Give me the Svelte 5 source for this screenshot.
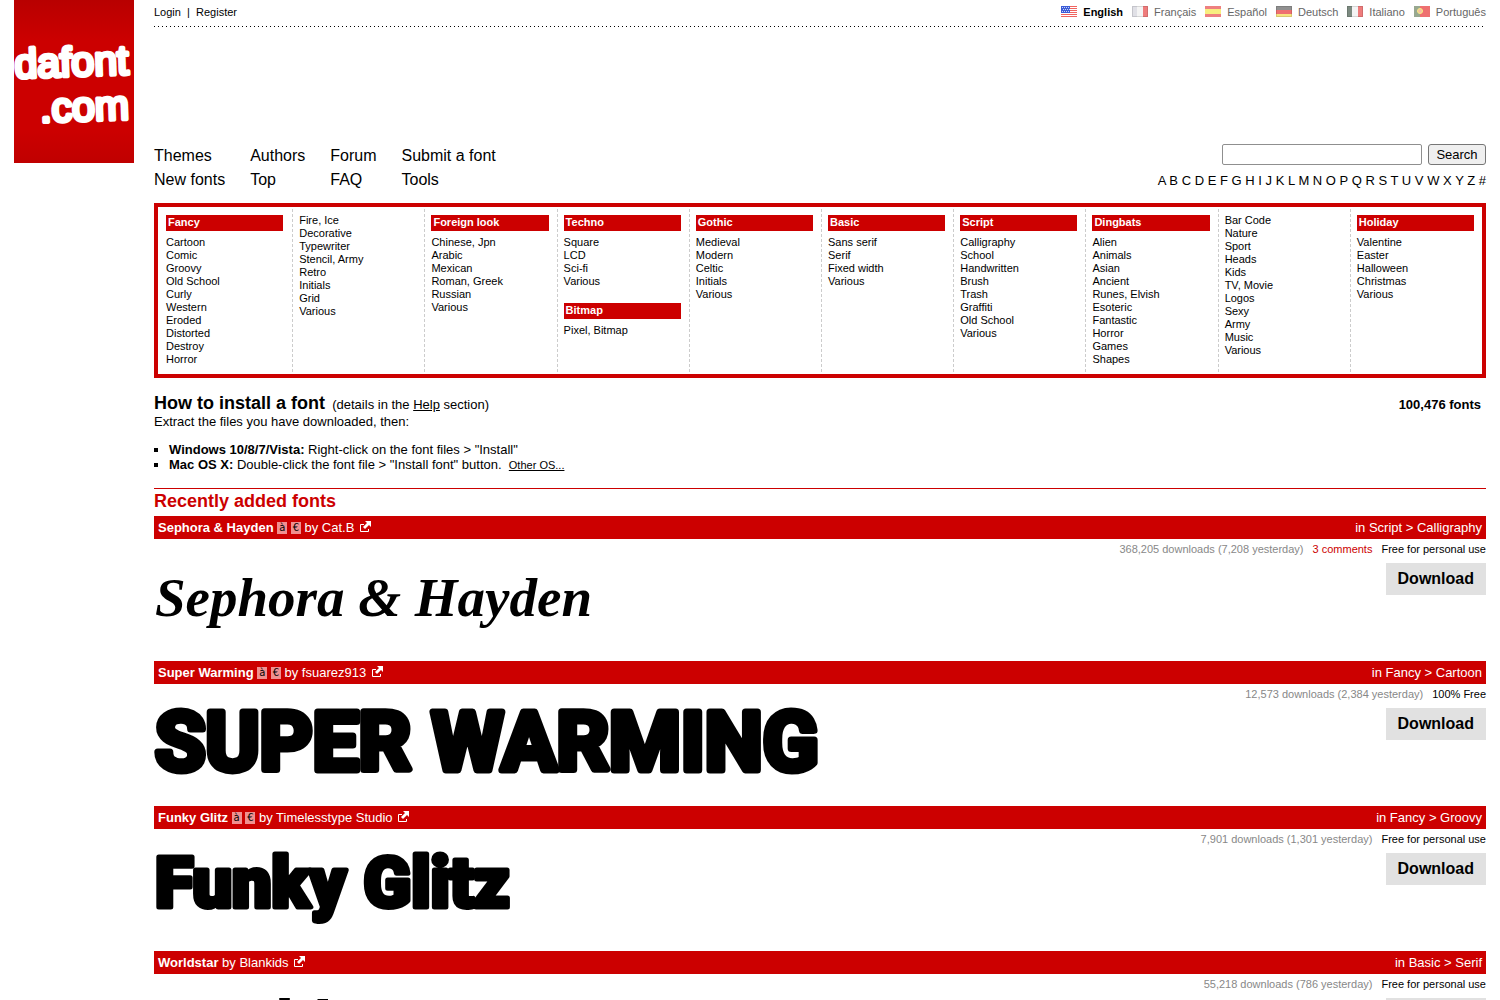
<script>
	const languages = [
		{ code: "us", name: "English" },
		{ code: "fr", name: "Français" },
		{ code: "es", name: "Español" },
		{ code: "de", name: "Deutsch" },
		{ code: "it", name: "Italiano" },
		{ code: "pt", name: "Português" },
	];

	const menu = [
		["Themes", "New fonts"],
		["Authors", "Top"],
		["Forum", "FAQ"],
		["Submit a font", "Tools"],
	];

	const letters = "ABCDEFGHIJKLMNOPQRSTUVWXYZ#".split("");

	const categories = [
		[{ title: "Fancy", items: ["Cartoon", "Comic", "Groovy", "Old School", "Curly", "Western", "Eroded", "Distorted", "Destroy", "Horror"] }],
		[{ items: ["Fire, Ice", "Decorative", "Typewriter", "Stencil, Army", "Retro", "Initials", "Grid", "Various"] }],
		[{ title: "Foreign look", items: ["Chinese, Jpn", "Arabic", "Mexican", "Roman, Greek", "Russian", "Various"] }],
		[
			{ title: "Techno", items: ["Square", "LCD", "Sci-fi", "Various"] },
			{ title: "Bitmap", items: ["Pixel, Bitmap"] },
		],
		[{ title: "Gothic", items: ["Medieval", "Modern", "Celtic", "Initials", "Various"] }],
		[{ title: "Basic", items: ["Sans serif", "Serif", "Fixed width", "Various"] }],
		[{ title: "Script", items: ["Calligraphy", "School", "Handwritten", "Brush", "Trash", "Graffiti", "Old School", "Various"] }],
		[{ title: "Dingbats", items: ["Alien", "Animals", "Asian", "Ancient", "Runes, Elvish", "Esoteric", "Fantastic", "Horror", "Games", "Shapes"] }],
		[{ items: ["Bar Code", "Nature", "Sport", "Heads", "Kids", "TV, Movie", "Logos", "Sexy", "Army", "Music", "Various"] }],
		[{ title: "Holiday", items: ["Valentine", "Easter", "Halloween", "Christmas", "Various"] }],
	];

	const fonts = [
		{ name: "Sephora & Hayden", accents: true, author: "Cat.B", theme: "Script", category: "Calligraphy", downloads: "368,205 downloads (7,208 yesterday)", comments: "3 comments", license: "Free for personal use", preview: "Sephora & Hayden", style: "script", baseline: 77 },
		{ name: "Super Warming", accents: true, author: "fsuarez913", theme: "Fancy", category: "Cartoon", downloads: "12,573 downloads (2,384 yesterday)", license: "100% Free", preview: "SUPER WARMING", style: "chunky", baseline: 86 },
		{ name: "Funky Glitz", accents: true, author: "Timelesstype Studio", theme: "Fancy", category: "Groovy", downloads: "7,901 downloads (1,301 yesterday)", license: "Free for personal use", preview: "Funky Glitz", style: "funky", baseline: 78 },
		{ name: "Worldstar", author: "Blankids", theme: "Basic", category: "Serif", downloads: "55,218 downloads (786 yesterday)", license: "Free for personal use", preview: "Worldstar", style: "serif", baseline: 70 },
	];

	let current = $state("English");
	let query = $state("");
</script>

<div class="page">
	<a class="logo" href="#home" aria-label="dafont.com">
		<svg width="120" height="163" viewBox="0 0 120 163">
			<defs>
				<linearGradient id="red" x1="0" y1="0" x2="0" y2="1">
					<stop offset="0" stop-color="#b80000" />
					<stop offset="0.25" stop-color="#cc0000" />
					<stop offset="0.8" stop-color="#cc0000" />
					<stop offset="1" stop-color="#c00000" />
				</linearGradient>
			</defs>
			<rect width="120" height="163" fill="url(#red)" />
			<g class="logo-text" transform="rotate(-2 60 80)">
				<text x="115" y="76" text-anchor="end">dafont</text>
				<text x="114" y="121" text-anchor="end">.com</text>
			</g>
		</svg>
	</a>

	<main>
		<header>
			<div class="top">
				<div><a href="#login">Login</a>&nbsp; | &nbsp;<a href="#register">Register</a></div>
				<div class="languages">
					{#each languages as lang}
						<button class:current={current === lang.name} onclick={() => (current = lang.name)}>
							<svg width="16" height="11" viewBox="0 0 16 11">
								{#if lang.code === "us"}
									<rect width="16" height="11" fill="#fff" />
									<path d="M0 .5h16M0 2.5h16M0 4.5h16M0 6.5h16M0 8.5h16M0 10.5h16" stroke="#f06460" />
									<rect width="9" height="7" fill="#3c5cd8" />
									<path d="M1 1.5h8M2 3.5h7M1 5.5h8" stroke="#cbd6f5" stroke-dasharray="1 1" />
								{:else if lang.code === "fr" || lang.code === "it"}
									<rect width="5" height="11" fill={lang.code === "fr" ? "#e0e0e6" : "#7c8a80"} />
									<rect x="5" width="6" height="11" fill="#f4f4f4" />
									<rect x="11" width="5" height="11" fill="#ee7c7c" />
									<path d="M.5 .5h15v10H.5z" fill="none" stroke="#000" opacity=".12" />
								{:else if lang.code === "es"}
									<rect width="16" height="11" fill="#ee8080" />
									<rect y="3" width="16" height="5" fill="#f8ee80" />
								{:else if lang.code === "de"}
									<rect width="16" height="4" fill="#909090" />
									<rect y="4" width="16" height="4" fill="#ee7070" />
									<rect y="8" width="16" height="3" fill="#f8e480" />
									<path d="M.5 .5h15v10H.5z" fill="none" stroke="#000" opacity=".12" />
								{:else}
									<rect width="16" height="11" fill="#ee7070" />
									<rect width="6" height="11" fill="#98a890" />
									<circle cx="6" cy="5" r="2.5" fill="#f6c0a0" stroke="#f8ee80" />
								{/if}
							</svg>{lang.name}
						</button>
					{/each}
				</div>
			</div>
			<div class="nav">
				<nav>
					{#each menu as group}
						<div>
							{#each group as item}<a href="#menu">{item}</a>{/each}
						</div>
					{/each}
				</nav>
				<div class="find">
					<form onsubmit={(e) => e.preventDefault()}>
						<input type="text" aria-label="Search fonts" bind:value={query} />
						<button>Search</button>
					</form>
					<div class="letters">
						{#each letters as letter}<a href="#letter">{letter}</a>{" "}{/each}
					</div>
				</div>
			</div>
		</header>

		<div class="categories">
			{#each categories as column}
				<div class="column">
					{#each column as group}
						<section>
							{#if group.title}<h3>{group.title}</h3>{/if}
							{#each group.items as item}<a href="#category">{item}</a>{/each}
						</section>
					{/each}
				</div>
			{/each}
		</div>

		<div class="install">
			<div class="install-title">
				<div><h2>How to install a font</h2> &nbsp;(details in the <a href="#help">Help</a> section)</div>
				<strong>100,476 fonts</strong>
			</div>
			<p>Extract the files you have downloaded, then:</p>
			<ul>
				<li><b>Windows 10/8/7/Vista:</b> Right-click on the font files &gt; "Install"</li>
				<li><b>Mac OS X:</b> Double-click the font file &gt; "Install font" button. &nbsp;<a class="other" href="#other">Other OS...</a></li>
			</ul>
		</div>

		<h2 class="recent">Recently added fonts</h2>

		{#each fonts as font}
			<article>
				<div class="bar">
					<div>
						<a href="#font"><b>{font.name}</b></a>
						{#if font.accents}<span class="tag">à</span> <span class="tag">€</span>{/if}
						by <a href="#author">{font.author}</a>
						<a class="external" href="#site" aria-label="Author's site">
							<svg width="11" height="11" viewBox="0 0 11 11">
								<path d="M4 3.5H.5v7h8V8" fill="none" stroke="#fff" />
								<path d="M5 0h6v6L9 4 5 8 3 6l4-4z" fill="#fff" />
							</svg>
						</a>
					</div>
					<div>in <a href="#theme">{font.theme}</a> &gt; <a href="#theme">{font.category}</a></div>
				</div>
				<div class="body">
					<a class="preview" href="#font">
						<svg width="700" height="122">
							<text class={font.style} x="1" y={font.baseline}>{font.preview}</text>
						</svg>
					</a>
					<div class="side">
						<div class="info">
							<span class="count">{font.downloads}</span>
							{#if font.comments}<a class="comments" href="#comments">{font.comments}</a>{/if}
							<span>{font.license}</span>
						</div>
						<a class="download" href="#download">Download</a>
					</div>
				</div>
			</article>
		{/each}
	</main>
</div>

<style>
	:global(body) {
		background: #fff;
		overflow: hidden;
	}

	.page {
		display: flex;
		align-items: flex-start;
		gap: 20px;
		height: 100vh;
		padding: 0 14px;
		box-sizing: border-box;
		font: 13px/15px "Liberation Sans", Arial, sans-serif;
		color: #000;
	}

	main {
		flex: 1;
	}

	a {
		color: inherit;
		text-decoration: none;
	}

	h2,
	h3,
	p,
	ul {
		margin: 0;
		padding: 0;
	}

	svg {
		display: block;
	}

	.logo-text {
		font: 41px "Liberation Sans", Arial, sans-serif;
		fill: #fff;
		stroke: #fff;
		stroke-width: 4px;
		stroke-linejoin: round;
	}

	.top {
		display: flex;
		justify-content: space-between;
		height: 27px;
		padding-top: 5px;
		box-sizing: border-box;
		font-size: 11px;
		background: repeating-linear-gradient(90deg, #000 0 1px, transparent 1px 4px) left bottom / 100% 1px no-repeat;
	}

	.languages {
		display: flex;
		gap: 9px;
	}

	.languages button {
		display: flex;
		gap: 6px;
		height: 15px;
		padding: 0;
		border: 0;
		background: none;
		font: inherit;
		color: #666;
	}

	.languages svg {
		margin-top: 1px;
	}

	.languages .current {
		font-weight: bold;
		color: #000;
	}

	.nav {
		display: flex;
		justify-content: space-between;
		padding-top: 117px;
		height: 59px;
	}

	nav {
		display: flex;
		gap: 25px;
		font-size: 16px;
		line-height: 24px;
	}

	nav a {
		display: block;
	}

	form {
		display: flex;
		justify-content: flex-end;
		gap: 6px;
	}

	input {
		width: 200px;
		height: 21px;
		box-sizing: border-box;
		border: 1px solid #8f8f8f;
		border-radius: 2px;
	}

	form button {
		width: 58px;
		height: 21px;
		padding: 0;
		border: 1px solid #767676;
		border-radius: 3px;
		background: #efefef;
		font: 13px/15px "Liberation Sans", Arial, sans-serif;
	}

	.letters {
		margin-top: 8px;
	}

	.categories {
		display: flex;
		padding: 2px 0;
		border: 4px solid #c00;
		font-size: 11px;
		line-height: 13px;
	}

	.column {
		flex: 1;
		min-height: 154px;
		padding: 5px 8px 4px 6px;
	}

	.column:first-child {
		padding-left: 8px;
		padding-right: 9px;
	}

	.column + .column {
		border-left: 1px dashed #ccc;
	}

	.column a {
		display: block;
	}

	.column h3 {
		height: 16px;
		margin: 1px 0 5px;
		padding-left: 2px;
		background: #c00;
		font-size: 11px;
		line-height: 15px;
		color: #fff;
	}

	section + section {
		margin-top: 15px;
	}

	.install-title {
		display: flex;
		justify-content: space-between;
		align-items: baseline;
		padding: 14px 5px 0 0;
	}

	h2 {
		display: inline;
		font-size: 18px;
		line-height: 22px;
	}

	.install a {
		text-decoration: underline;
	}

	.install ul {
		margin-top: 13px;
		padding-left: 15px;
		list-style: square;
	}

	.other {
		font-size: 11px;
	}

	.recent {
		display: block;
		margin-top: 15px;
		border-top: 1px solid #c00;
		padding: 1px 0 4px;
		color: #c00;
	}

	.bar {
		display: flex;
		justify-content: space-between;
		height: 23px;
		padding: 4px;
		box-sizing: border-box;
		background: #c00;
		color: #fff;
	}

	.tag {
		display: inline-block;
		width: 10px;
		height: 12px;
		background: #f09090;
		font: 10px/12px "DejaVu Sans", sans-serif;
		text-align: center;
		color: #000;
		vertical-align: 1px;
	}

	.external {
		display: inline-block;
		margin-left: 2px;
	}

	.body {
		display: flex;
		justify-content: space-between;
		height: 122px;
	}

	.preview svg {
		overflow: visible;
	}

	.preview text {
		stroke: #000;
		stroke-linejoin: round;
		stroke-width: 0;
	}

	.script {
		font: italic bold 55px "Liberation Serif", serif;
	}

	.preview .chunky {
		font: bold 82px Roboto, sans-serif;
		stroke-width: 7px;
	}

	.preview .funky {
		font: 900 70px Roboto, sans-serif;
		stroke-width: 5px;
	}

	.serif {
		font: 60px "DejaVu Serif", serif;
	}

	.side {
		display: flex;
		flex-direction: column;
		align-items: flex-end;
		padding-top: 3px;
	}

	.info {
		display: flex;
		gap: 9px;
		font-size: 11px;
	}

	.count {
		color: #888;
	}

	.comments {
		color: #c00;
	}

	.download {
		margin-top: 6px;
		padding: 0 12px;
		background: #e1e1e1;
		font-size: 16px;
		font-weight: bold;
		line-height: 32px;
	}
</style>
